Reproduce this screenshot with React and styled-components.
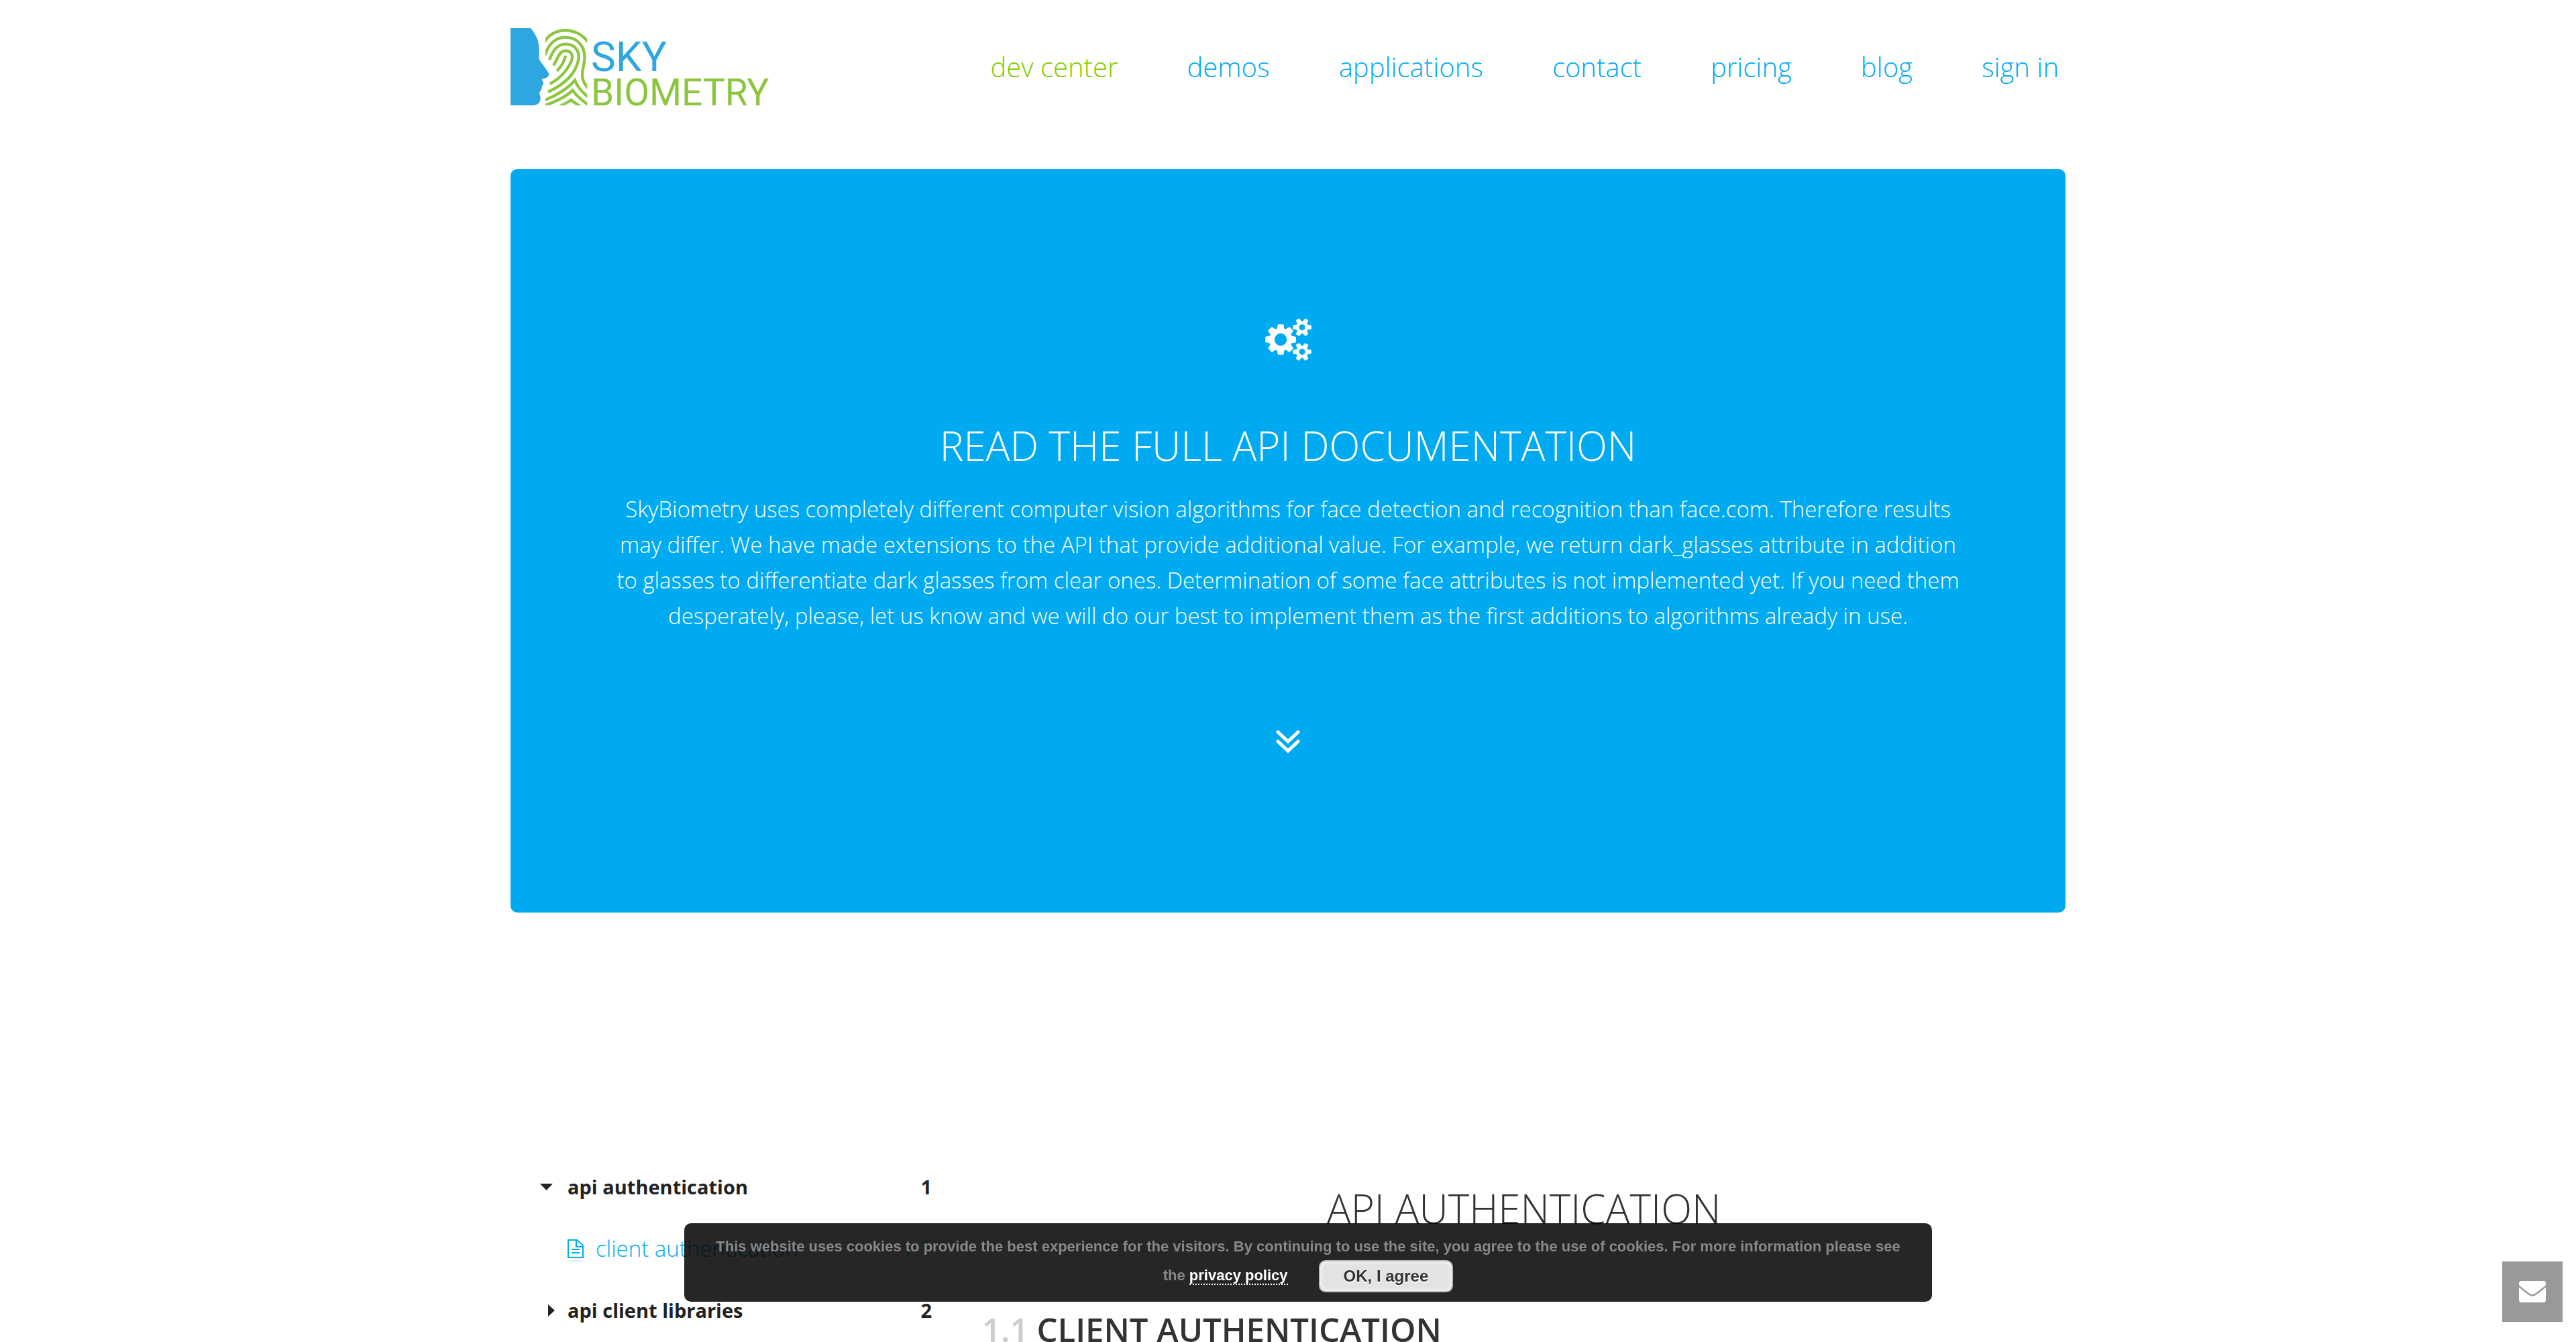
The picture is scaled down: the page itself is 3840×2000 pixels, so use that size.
import React from "react";
import styled, { createGlobalStyle } from "styled-components";

const GlobalStyle = createGlobalStyle`
  * { box-sizing: border-box; }
  html { scrollbar-width: none; }
  body {
    margin: 0;
    background: #fff;
    color: #333;
    font-family: "Open Sans", sans-serif;
    font-size: 32px;
    font-weight: 300;
  }
  a { color: inherit; text-decoration: none; }
`;

const Page = styled.div`
  width: 100%;
  max-width: 2318px;
  margin: 0 auto;
`;

const Header = styled.header`
  display: flex;
  justify-content: space-between;
  align-items: center;
  padding: 42px 10px 95px 0;
`;

const LogoLink = styled.a`
  display: flex;
  gap: 5px;
  height: 115px;
`;

const LogoMark = styled.svg`
  display: block;
  width: 115px;
  height: 115px;
`;

const LogoText = styled.span`
  display: flex;
  flex-direction: column;
  justify-content: flex-end;
  gap: 15px;
  font-family: Roboto, sans-serif;
  font-weight: 400;
  color: #8cc63f;
  font-size: 55px;
  line-height: 38px;
`;

const LogoTop = styled.span`
  color: #2ea7e0;
  font-size: 62px;
`;

const Nav = styled.nav`
  display: flex;
  gap: 103px;
`;

const NavLink = styled.a`
  color: ${(p) => (p.$active ? "#82cc00" : "#00aaf0")};
  font-size: 40px;
  line-height: 56px;
`;

const Hero = styled.section`
  display: flex;
  flex-direction: column;
  align-items: center;
  padding: 222px 120px 237px;
  background: #00aaf0;
  border-radius: 10px;
  color: #fff;
  text-align: center;
`;

const Cogs = styled.svg`
  display: block;
  width: 69px;
  height: 64px;
`;

const HeroTitle = styled.h1`
  margin: 84px 0 26px;
  font-size: 60px;
  font-weight: 350;
  line-height: 84px;
`;

const HeroText = styled.p`
  margin: 0;
  font-size: 33px;
  font-weight: 350;
  line-height: 53px;
`;

const ScrollLink = styled.a`
  display: block;
  margin-top: 143px;
`;

const Chevrons = styled.svg`
  display: block;
  width: 36px;
  height: 36px;
`;

const Docs = styled.div`
  display: grid;
  grid-template-columns: 628px 1fr;
  column-gap: 75px;
  padding-top: 363px;
`;

const TocList = styled.ul`
  margin: 0;
  padding: 0;
  list-style: none;
`;

const TocLink = styled.a`
  display: flex;
  align-items: center;
  line-height: 92px;
  padding-left: ${(p) => (p.$sub ? "85px" : "43px")};
  color: ${(p) => (p.$sub ? "#00aaf0" : "#222")};
  font-weight: ${(p) => (p.$sub ? 300 : 700)};
  font-size: ${(p) => (p.$sub ? "33px" : "29px")};
`;

const TocIcon = styled.svg`
  flex: none;
  width: 24px;
  height: 28px;
  margin-right: 18px;
`;

const TocNumber = styled.span`
  margin-left: auto;
`;

const Main = styled.main`
  padding-top: 36px;
`;

const SectionTitle = styled.h2`
  margin: 0 0 98px;
  font-size: 60px;
  font-weight: 350;
  line-height: 84px;
  text-align: center;
`;

const SubTitle = styled.h3`
  display: flex;
  gap: 12px;
  margin: 0;
  font-size: 49px;
  font-weight: 600;
  line-height: 80px;
`;

const SubNumber = styled.span`
  color: #ccc;
`;

const CookieBar = styled.div`
  position: fixed;
  left: calc(50% - 900px);
  bottom: 60px;
  width: 1860px;
  padding: 15px 30px 14px;
  border-radius: 10px;
  background: rgba(0, 0, 0, 0.85);
  color: #888;
  font-family: "Liberation Sans", sans-serif;
  font-size: 22px;
  font-weight: 700;
  line-height: 40px;
  text-align: center;
`;

const PolicyLink = styled.a`
  color: #fff;
  border-bottom: 2px dotted #fff;
`;

const AgreeButton = styled.button`
  height: 48px;
  margin: 0 0 0 46px;
  padding: 0 35px;
  border: 2px solid #bbb;
  border-radius: 10px;
  background: #e3e3e3;
  box-shadow: inset 0 0 4px 2px #f5f5f5;
  color: #333;
  font: 700 24px/42px "Liberation Sans", sans-serif;
  text-shadow: 0 2px 0 #fff;
  vertical-align: middle;
`;

const MailButton = styled.button`
  position: fixed;
  right: 20px;
  bottom: 30px;
  display: flex;
  align-items: center;
  justify-content: center;
  width: 90px;
  height: 90px;
  padding: 0;
  border: 0;
  background: #999;
`;

const Envelope = styled.svg`
  display: block;
  width: 40px;
  height: 32px;
`;

const NAV = ["dev center", "demos", "applications", "contact", "pricing", "blog", "sign in"];

const SMALL_COG =
  "v140q0 16-149 31-12 27-30 52 51 113 51 138 0 4-4 7-122 71-124 71-8 0-46-47t-52-68q-20 2-30 2t-30-2q-14 21-52 68t-46 47q-2 0-124-71-4-3-4-7 0-25 51-138-18-25-30-52-149-15-149-31v-140q0-16 149-31 13-29 30-52-51-113-51-138 0-4 4-7 4-2 35-20t59-34 30-16q8 0 46 46.500t52 67.500q20-2 30-2t30 2q51-71 92-112l6-2q4 0 124 70 4 3 4 7 0 25-51 138 17 23 30 52 149 15 149 31z";

function Logo() {
  return (
    <LogoLink href="#" aria-label="Sky Biometry">
      <LogoMark viewBox="60 67 345 345" preserveAspectRatio="none" aria-hidden="true">
        <path
          fill="#2ea7e0"
          d="M60 67H150C176 98 190 128 188 170V205C198 224 218 246 231 268C234 282 224 291 201 294C199 300 208 306 207 315C207 322 199 323 200 330C202 340 194 345 190 353C187 364 197 370 193 390C188 403 178 411 162 412H60Z"
        />
        <clipPath id="print">
          <path d="M216 60H403V412H216Z" />
        </clipPath>
        <g clipPath="url(#print)" fill="none" stroke="#8cc63f" strokeWidth="13">
          <path d="M212 128C250 60 360 58 408 132" />
          <path d="M214 188C232 134 265 108 306 108C362 108 396 152 391 208C388 240 381 252 381 275C381 303 393 318 408 336" />
          <path d="M234 208C252 162 272 138 308 138C348 138 371 172 364 208C352 268 306 316 228 352" />
          <path d="M252 233C275 198 276 168 308 168C332 170 343 190 332 214C314 256 285 290 236 316" />
          <path d="M307 190C300 216 286 240 268 258" />
          <path d="M214 388C270 366 322 332 348 300C358 330 384 356 408 376" />
          <path d="M214 412C262 396 312 370 338 345C354 370 380 390 408 410" />
          <path d="M280 416C300 406 320 398 330 388C342 397 356 406 372 416" />
        </g>
      </LogoMark>
      <LogoText>
        <LogoTop>SKY</LogoTop>
        <span>BIOMETRY</span>
      </LogoText>
    </LogoLink>
  );
}

export default function App() {
  return (
    <>
      <GlobalStyle />
      <Page>
        <Header>
          <Logo />
          <Nav>
            {NAV.map((label, i) => (
              <NavLink key={label} href="#" $active={i === 0}>
                {label}
              </NavLink>
            ))}
          </Nav>
        </Header>

        <Hero>
          <Cogs viewBox="0 0 1920 1792" fill="#fff" fillRule="evenodd" aria-hidden="true">
            <path d="M896 896q0-106-75-181t-181-75-181 75-75 181 75 181 181 75 181-75 75-181zm384-91v185q0 10-7 19.500t-16 10.500l-155 24q-11 35-32 76 34 48 90 115 7 11 7 20 0 12-7 19-23 30-82.500 89.500t-78.500 59.500q-11 0-21-7l-115-90q-37 19-77 31-11 108-23 155-7 24-30 24h-186q-11 0-20-7.500t-10-17.500l-23-153q-34-10-75-31l-118 89q-7 7-20 7-11 0-21-8-144-133-144-160 0-9 7-19 10-14 41-53t47-61q-23-44-35-82l-152-24q-10-1-17-9.500t-7-19.500v-185q0-10 7-19.500t16-10.500l155-24q11-35 32-76-34-48-90-115-7-11-7-20 0-12 7-20 22-30 82-89t79-59q11 0 21 7l115 90q34-18 77-32 11-108 23-154 7-24 30-24h186q11 0 20 7.500t10 17.500l23 153q34 10 75 31l118-89q8-7 20-7 11 0 21 8 144 133 144 160 0 8-7 19-12 16-42 54t-45 60q23 48 34 82l152 23q10 2 17 10.500t7 19.500z" />
            <path d={`M1664 1408q0-52-38-90t-90-38-90 38-38 90q0 53 37.500 90.500t90.500 37.500 90.500-37.500 37.500-90.500zM1920 1338${SMALL_COG}`} />
            <path d={`M1664 384q0-52-38-90t-90-38-90 38-38 90q0 53 37.500 90.500t90.500 37.500 90.500-37.500 37.500-90.500zM1920 314${SMALL_COG}`} />
          </Cogs>
          <HeroTitle>READ THE FULL API DOCUMENTATION</HeroTitle>
          <HeroText>
            SkyBiometry uses completely different computer vision algorithms for face detection and recognition than face.com. Therefore results
            <br />
            may differ. We have made extensions to the API that provide additional value. For example, we return dark_glasses attribute in addition
            <br />
            to glasses to differentiate dark glasses from clear ones. Determination of some face attributes is not implemented yet. If you need them
            <br />
            desperately, please, let us know and we will do our best to implement them as the first additions to algorithms already in use.
          </HeroText>
          <ScrollLink href="#docs" aria-label="Scroll down">
            <Chevrons viewBox="0 0 36 36" fill="none" stroke="#fff" strokeWidth="5" strokeLinecap="round" aria-hidden="true">
              <path d="M3 4L18 18L33 4M3 18L18 32L33 18" />
            </Chevrons>
          </ScrollLink>
        </Hero>

        <Docs id="docs">
          <TocList>
            <li>
              <TocLink href="#">
                <TocIcon viewBox="0 0 24 28" aria-hidden="true">
                  <path fill="#222" d="M1 9H20L10.500 19Z" />
                </TocIcon>
                <span>api authentication</span>
                <TocNumber>1</TocNumber>
              </TocLink>
            </li>
            <li>
              <TocLink href="#" $sub>
                <TocIcon viewBox="0 0 24 28" fill="none" stroke="#00aaf0" strokeWidth="2" aria-hidden="true">
                  <path d="M1 1H14L23 9V27H1ZM13 1V11H23M6 15H18M6 20H18" />
                </TocIcon>
                <span>client authentication</span>
                <TocNumber>1.1</TocNumber>
              </TocLink>
            </li>
            <li>
              <TocLink href="#">
                <TocIcon viewBox="0 0 24 28" aria-hidden="true">
                  <path fill="#222" d="M13 5V23L23 14Z" />
                </TocIcon>
                <span>api client libraries</span>
                <TocNumber>2</TocNumber>
              </TocLink>
            </li>
          </TocList>
          <Main>
            <SectionTitle>API AUTHENTICATION</SectionTitle>
            <SubTitle>
              <SubNumber>1.1</SubNumber>
              <span>CLIENT AUTHENTICATION</span>
            </SubTitle>
          </Main>
        </Docs>
      </Page>

      <CookieBar>
        This website uses cookies to provide the best experience for the visitors. By continuing to use the site, you agree to the use of cookies. For more information please see the{" "}
        <PolicyLink href="#">privacy policy</PolicyLink>
        <AgreeButton type="button">OK, I agree</AgreeButton>
      </CookieBar>

      <MailButton type="button" aria-label="Send a message">
        <Envelope viewBox="0 0 40 32" aria-hidden="true">
          <rect width="40" height="32" rx="4" fill="#fff" />
          <path d="M-1 7C5 12 10 16 15 19.500Q20 23.500 25 19.500C30 16 35 12 41 7" fill="none" stroke="#999" strokeWidth="2.500" />
        </Envelope>
      </MailButton>
    </>
  );
}
